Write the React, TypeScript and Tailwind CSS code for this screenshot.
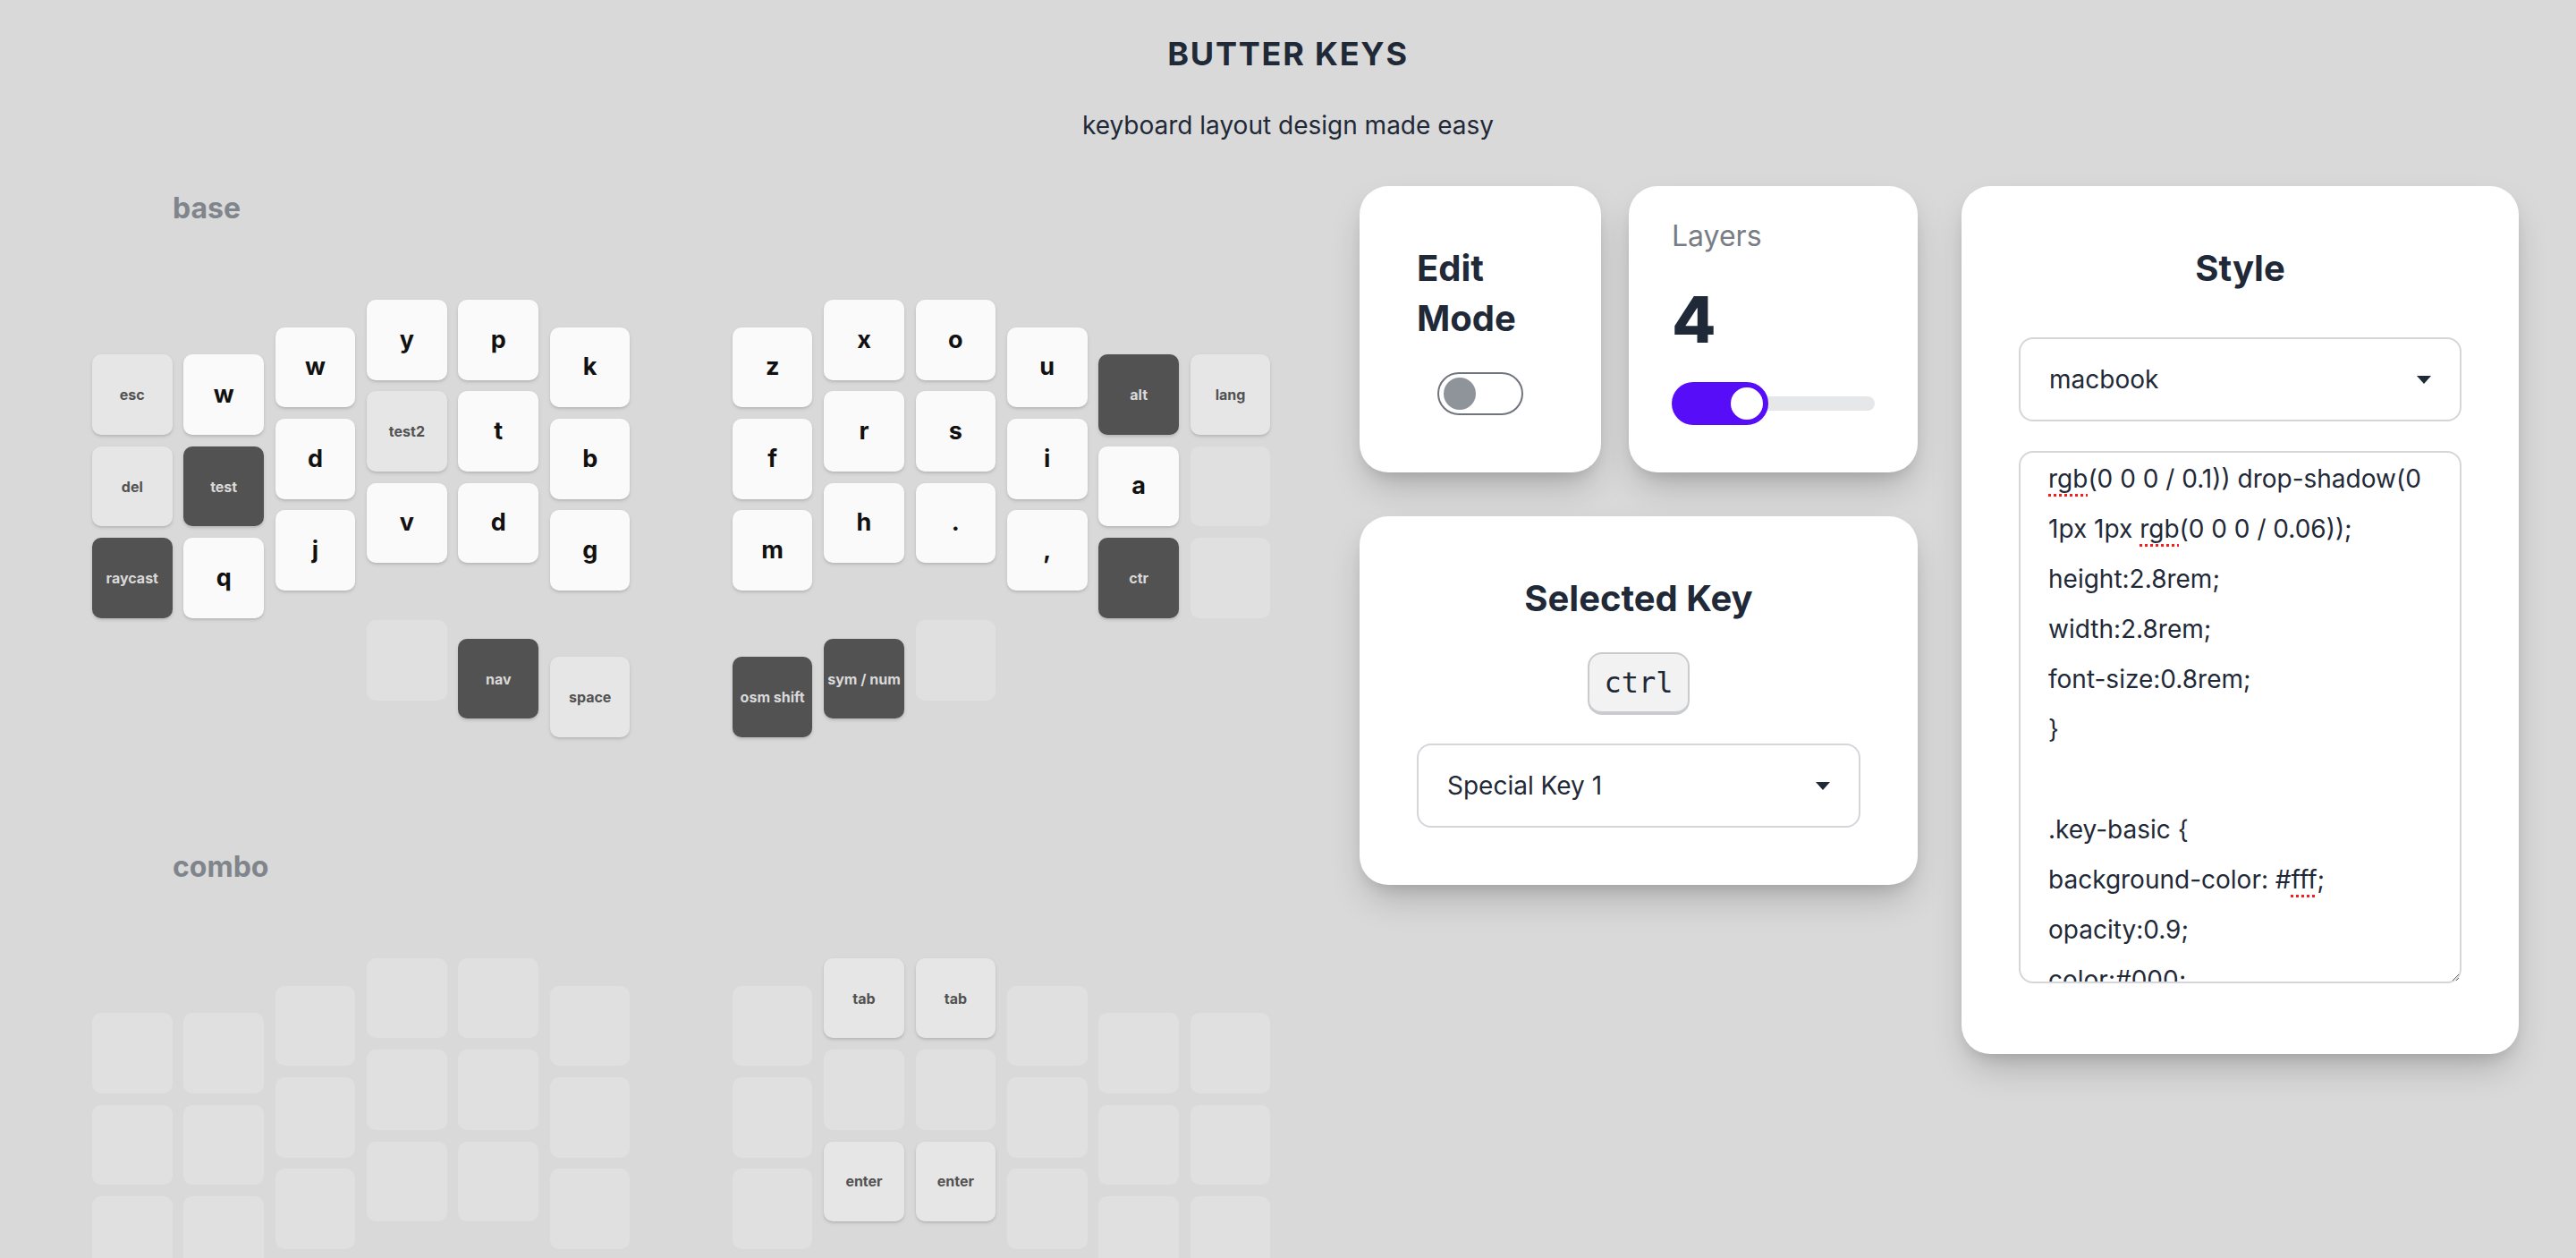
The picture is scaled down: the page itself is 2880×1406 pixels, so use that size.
type Kind = 'l' | 'g' | 'd' | 'e';
type K = [string, Kind];
type Col = { pad: string; keys: K[]; thumb?: { gap: string; key: K } };

const kindCls: Record<Kind, string> = {
  l: 'bg-[#fafafa] text-[#111111] text-[27px] shadow-[0_2px_4px_rgba(0,0,0,0.1),0_2px_2px_rgba(0,0,0,0.06)]',
  g: 'bg-[#e6e6e6] text-[#525252] text-[16px] shadow-[0_2px_4px_rgba(0,0,0,0.1),0_2px_2px_rgba(0,0,0,0.06)]',
  d: 'bg-[#525252] text-[#d9d9d9] text-[16px] shadow-[0_2px_4px_rgba(0,0,0,0.1),0_2px_2px_rgba(0,0,0,0.06)]',
  e: 'bg-[#e0e0e0]',
};

const E: K = ['', 'e'];

const baseLeft: Col[] = [
  { pad: 'pt-[61.44px]', keys: [['esc', 'g'], ['del', 'g'], ['raycast', 'd']] },
  { pad: 'pt-[61.44px]', keys: [['w', 'l'], ['test', 'd'], ['q', 'l']] },
  { pad: 'pt-[30.72px]', keys: [['w', 'l'], ['d', 'l'], ['j', 'l']] },
  { pad: 'pt-0', keys: [['y', 'l'], ['test2', 'g'], ['v', 'l']], thumb: { gap: 'mt-[51.2px]', key: E } },
  { pad: 'pt-0', keys: [['p', 'l'], ['t', 'l'], ['d', 'l']], thumb: { gap: 'mt-[71.68px]', key: ['nav', 'd'] } },
  { pad: 'pt-[30.72px]', keys: [['k', 'l'], ['b', 'l'], ['g', 'l']], thumb: { gap: 'mt-[61.44px]', key: ['space', 'g'] } },
];

const baseRight: Col[] = [
  { pad: 'pt-[30.72px]', keys: [['z', 'l'], ['f', 'l'], ['m', 'l']], thumb: { gap: 'mt-[61.44px]', key: ['osm shift', 'd'] } },
  { pad: 'pt-0', keys: [['x', 'l'], ['r', 'l'], ['h', 'l']], thumb: { gap: 'mt-[71.68px]', key: ['sym / num', 'd'] } },
  { pad: 'pt-0', keys: [['o', 'l'], ['s', 'l'], ['.', 'l']], thumb: { gap: 'mt-[51.2px]', key: E } },
  { pad: 'pt-[30.72px]', keys: [['u', 'l'], ['i', 'l'], [',', 'l']] },
  { pad: 'pt-[61.44px]', keys: [['alt', 'd'], ['a', 'l'], ['ctr', 'd']] },
  { pad: 'pt-[61.44px]', keys: [['lang', 'g'], E, E] },
];

const comboLeft: Col[] = baseLeft.map((c) => ({
  pad: c.pad,
  keys: [E, E, E],
  thumb: c.thumb ? { gap: c.thumb.gap, key: E } : undefined,
}));

const comboRight: Col[] = baseRight.map((c, i) => ({
  pad: c.pad,
  keys: i === 1 || i === 2 ? [['tab', 'g'], E, ['enter', 'g']] : [E, E, E],
  thumb: c.thumb ? { gap: c.thumb.gap, key: E } : undefined,
}));

function Key({ k }: { k: K }) {
  return (
    <div
      className={`m-[6.4px] flex h-[89.6px] w-[89.6px] items-center justify-center rounded-[10px] font-bold ${kindCls[k[1]]}`}
    >
      {k[0]}
    </div>
  );
}

function Half({ cols }: { cols: Col[] }) {
  return (
    <div className="flex">
      {cols.map((c, i) => (
        <div key={i} className={`flex flex-col ${c.pad}`}>
          {c.keys.map((k, j) => (
            <Key key={j} k={k} />
          ))}
          {c.thumb && (
            <div className={c.thumb.gap}>
              <Key k={c.thumb.key} />
            </div>
          )}
        </div>
      ))}
    </div>
  );
}

function Layer({ name, left, right }: { name: string; left: Col[]; right: Col[] }) {
  return (
    <div className="pb-[111.6px]">
      <div className="pt-[3px] pl-[96.4px] text-[32px] leading-[48px] font-bold text-[#80858c]">{name}</div>
      <div className="mt-[71.6px] flex gap-[101.6px]">
        <Half cols={left} />
        <Half cols={right} />
      </div>
    </div>
  );
}

function Caret() {
  return (
    <svg width="16" height="9" viewBox="0 0 16 9">
      <path d="M0 0h16L8 9z" fill="#1f2937" />
    </svg>
  );
}

function Select({ value }: { value: string }) {
  return (
    <div className="flex h-[94px] w-full items-center justify-between rounded-[16px] border-2 border-[#d4d6da] bg-white pl-[32px] pr-[32px] text-[28px] text-[#1f2937]">
      <span>{value}</span>
      <Caret />
    </div>
  );
}

const card = 'rounded-[32px] bg-white shadow-[0_20px_40px_-8px_rgba(0,0,0,0.22),0_8px_16px_-6px_rgba(0,0,0,0.12)]';

const squiggle = 'underline decoration-dotted decoration-[#ff1a1a] decoration-[3px] underline-offset-[7px]';

const cssLines: React.ReactNode[] = [
  <><span className={squiggle}>rgb</span>(0 0 0 / 0.1)) drop-shadow(0</>,
  <>1px 1px <span className={squiggle}>rgb</span>(0 0 0 / 0.06));</>,
  'height:2.8rem;',
  'width:2.8rem;',
  'font-size:0.8rem;',
  '}',
  '\u00a0',
  '.key-basic {',
  <>background-color: #<span className={squiggle}>fff</span>;</>,
  'opacity:0.9;',
  'color:#000;',
];

export default function App() {
  return (
    <div className="h-screen overflow-hidden bg-[#d9d9d9] pt-[32px] font-[Inter,sans-serif] text-[#1f2937]">
      <h1 className="text-center text-[36px] leading-[56px] font-bold tracking-[0.05em]">BUTTER KEYS</h1>
      <p className="mt-[32px] text-center text-[28px] leading-[40px]">keyboard layout design made easy</p>

      <div className="mt-[46px] flex items-start">
        <div className="w-[1520px] shrink-0 pl-[96.6px]">
          <Layer name="base" left={baseLeft} right={baseRight} />
          <Layer name="combo" left={comboLeft} right={comboRight} />
        </div>

        <div className="mt-[2px] flex items-start gap-[49px]">
          <div className="flex w-[624px] flex-col">
            <div className="flex h-[320px] gap-[31px]">
              <div className={`${card} w-[270px] px-[64px] pt-[64px]`}>
                <div className="text-[40px] leading-[56px] font-bold">Edit Mode</div>
                <div className="mx-auto mt-[32px] flex h-[48px] w-[96px] items-center rounded-full border-2 border-[#70757d] bg-white pl-[5px]">
                  <div className="h-[36px] w-[36px] rounded-full bg-[#8f949b]" />
                </div>
              </div>
              <div className={`${card} w-[323px] px-[48px] pt-[32px]`}>
                <div className="text-[32px] leading-[48px] text-[#787d85]">Layers</div>
                <div className="mt-[29px] text-[72px] leading-[80px] font-extrabold">4</div>
                <div className="relative mt-[30px] h-[48px] w-full">
                  <div className="absolute top-[16px] right-0 left-0 h-[16px] rounded-full bg-[#e6e7e8]" />
                  <div className="absolute top-0 left-0 h-[48px] w-[84px] rounded-l-full bg-[#570df8]" />
                  <div className="absolute top-0 left-[60px] h-[48px] w-[48px] rounded-full border-[6px] border-[#570df8] bg-white" />
                </div>
              </div>
            </div>

            <div className={`${card} mt-[49px] flex flex-col items-center px-[64px] py-[64px]`}>
              <h2 className="text-[40px] leading-[56px] font-bold">Selected Key</h2>
              <div className="mt-[32px] flex h-[70px] items-center rounded-[16px] border-2 border-b-4 border-[#c9cbcf] bg-[#f2f2f2] px-[16px] font-['DejaVu_Sans_Mono',monospace] text-[32px] text-[#1f2937]">
                ctrl
              </div>
              <div className="mt-[32px] w-full">
                <Select value="Special Key 1" />
              </div>
            </div>
          </div>

          <div className={`${card} flex w-[623px] flex-col items-center px-[64px] pt-[64px] pb-[79px]`}>
            <h2 className="text-[40px] leading-[56px] font-bold">Style</h2>
            <div className="mt-[49px] w-full">
              <Select value="macbook" />
            </div>
            <div className="mt-[33px] h-[595px] w-full resize overflow-hidden rounded-[16px] border-2 border-[#d4d6da] bg-white px-[31px] pt-[1px] text-[28px] leading-[56px] text-[#1f2937]">
              {cssLines.map((l, i) => (
                <div key={i} className="whitespace-pre">
                  {l}
                </div>
              ))}
            </div>
          </div>
        </div>
      </div>
    </div>
  );
}
